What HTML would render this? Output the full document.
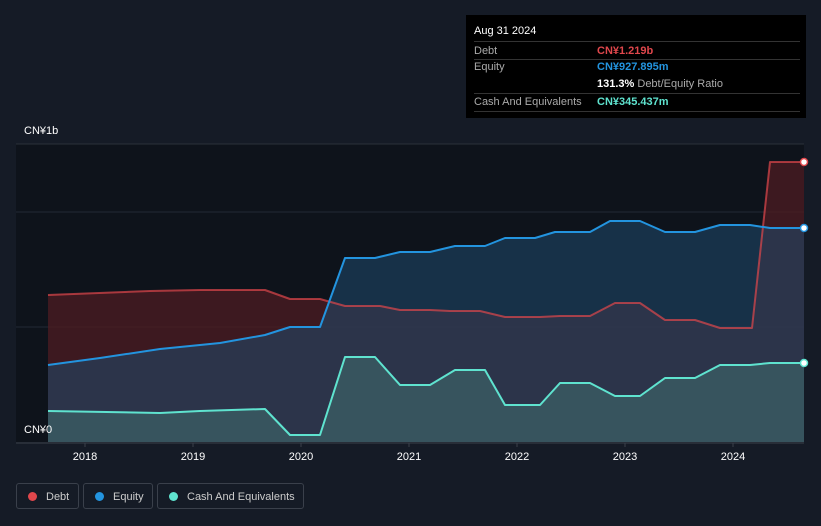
<!DOCTYPE html>
<html><head><style>
body{margin:0;background:#151b26;width:821px;height:526px;overflow:hidden;font-family:"Liberation Sans",sans-serif;position:relative}
.t{position:absolute;color:#fff;font-size:11px}
.tip{position:absolute;left:466px;top:15px;width:340px;height:103px;background:#000;font-size:11px}
.row{position:absolute;left:8px;width:326px;border-top:1px solid #333}
.lg{position:absolute;top:483px;height:26px;border:1px solid #3a404b;border-radius:3px;color:#ccc;font-size:11px;line-height:26px;white-space:nowrap;box-sizing:border-box}
.dot{display:inline-block;width:9px;height:9px;border-radius:50%;margin:0 9px 0 11px;vertical-align:-1px}
</style></head><body>
<svg width="821" height="526" style="position:absolute;left:0;top:0">
<rect x="16" y="144" width="788" height="298" fill="#0e131b"/>
<line x1="16" y1="144" x2="804" y2="144" stroke="#2a303a"/>
<line x1="16" y1="212" x2="804" y2="212" stroke="#232a34"/>
<line x1="16" y1="327" x2="804" y2="327" stroke="#232a34"/>
<polygon fill="#4a1c22" fill-opacity="0.8" points="48,442 48,295 150,291 200,290 265,290 290,299 320,299 345,306 380,306 400,310 430,310 450,311 480,311 505,317 540,317 560,316 590,316 615,303 640,303 665,320 695,320 720,328 752,328 770,162 804,162 804,442"/>
<polygon fill="#1f4a6e" fill-opacity="0.55" points="48,442 48,365 100,358 160,349 220,343 265,335 290,327 320,327 345,258 375,258 400,252 430,252 455,246 485,246 505,238 535,238 555,232 590,232 610,221 640,221 665,232 695,232 720,225 750,225 770,228 804,228 804,442"/>
<polygon fill="#3f6b6c" fill-opacity="0.6" points="48,442 48,411 160,413 200,411 265,409 290,435 320,435 345,357 375,357 400,385 430,385 455,370 485,370 505,405 540,405 560,383 590,383 615,396 640,396 665,378 695,378 720,365 750,365 770,363 804,363 804,442"/>
<g fill="none" stroke-width="2" stroke-linejoin="round">
<polyline stroke="#e0474c" points="48,295 150,291 200,290 265,290 290,299 320,299 345,306 380,306 400,310 430,310 450,311 480,311 505,317 540,317 560,316 590,316 615,303 640,303 665,320 695,320 720,328 752,328 770,162 804,162" stroke-opacity="0.7"/>
<polyline stroke="#2394df" points="48,365 100,358 160,349 220,343 265,335 290,327 320,327 345,258 375,258 400,252 430,252 455,246 485,246 505,238 535,238 555,232 590,232 610,221 640,221 665,232 695,232 720,225 750,225 770,228 804,228"/>
<polyline stroke="#5fe3cf" points="48,411 160,413 200,411 265,409 290,435 320,435 345,357 375,357 400,385 430,385 455,370 485,370 505,405 540,405 560,383 590,383 615,396 640,396 665,378 695,378 720,365 750,365 770,363 804,363"/>
</g>
<circle cx="804" cy="162" r="3.5" fill="#fff" stroke="#e0474c" stroke-width="1.5"/>
<circle cx="804" cy="228" r="3.5" fill="#fff" stroke="#2394df" stroke-width="1.5"/>
<circle cx="804" cy="363" r="3.5" fill="#fff" stroke="#5fe3cf" stroke-width="1.5"/>
<line x1="16" y1="443" x2="804" y2="443" stroke="#3a404b"/>
<g stroke="#3a404b"><line x1="85" y1="443" x2="85" y2="447"/><line x1="193" y1="443" x2="193" y2="447"/><line x1="301" y1="443" x2="301" y2="447"/><line x1="409" y1="443" x2="409" y2="447"/><line x1="517" y1="443" x2="517" y2="447"/><line x1="625" y1="443" x2="625" y2="447"/><line x1="733" y1="443" x2="733" y2="447"/></g>
<g fill="#fff" font-size="11" text-anchor="middle" font-family="Liberation Sans"><text x="85" y="460">2018</text><text x="193" y="460">2019</text><text x="301" y="460">2020</text><text x="409" y="460">2021</text><text x="517" y="460">2022</text><text x="625" y="460">2023</text><text x="733" y="460">2024</text></g>
</svg>
<div class="t" style="left:24px;top:125px">CN¥1b</div>
<div class="t" style="left:24px;top:424px">CN¥0</div>
<div class="tip">
<div style="position:absolute;left:8px;top:10px;color:#fff">Aug 31 2024</div>
<div class="row" style="top:26px;height:18px"><span style="position:absolute;left:0;top:3px;color:#aaa">Debt</span><span style="position:absolute;left:123px;top:3px;color:#e0474c;font-weight:bold">CN¥1.219b</span></div>
<div class="row" style="top:44px;height:34px"><span style="position:absolute;left:0;top:1px;color:#aaa">Equity</span><span style="position:absolute;left:123px;top:1px;color:#2394df;font-weight:bold">CN¥927.895m</span><span style="position:absolute;left:123px;top:18px;color:#fff;font-weight:bold">131.3% <span style="color:#aaa;font-weight:normal">Debt/Equity Ratio</span></span></div>
<div class="row" style="top:78px;height:17px;border-bottom:1px solid #333"><span style="position:absolute;left:0;top:2px;color:#aaa">Cash And Equivalents</span><span style="position:absolute;left:123px;top:2px;color:#5fe3cf;font-weight:bold">CN¥345.437m</span></div>
</div>
<div class="lg" style="left:16px;width:63px"><span class="dot" style="background:#e0474c"></span>Debt</div>
<div class="lg" style="left:83px;width:70px"><span class="dot" style="background:#2394df"></span>Equity</div>
<div class="lg" style="left:157px;width:147px"><span class="dot" style="background:#5fe3cf"></span>Cash And Equivalents</div>
</body></html>
